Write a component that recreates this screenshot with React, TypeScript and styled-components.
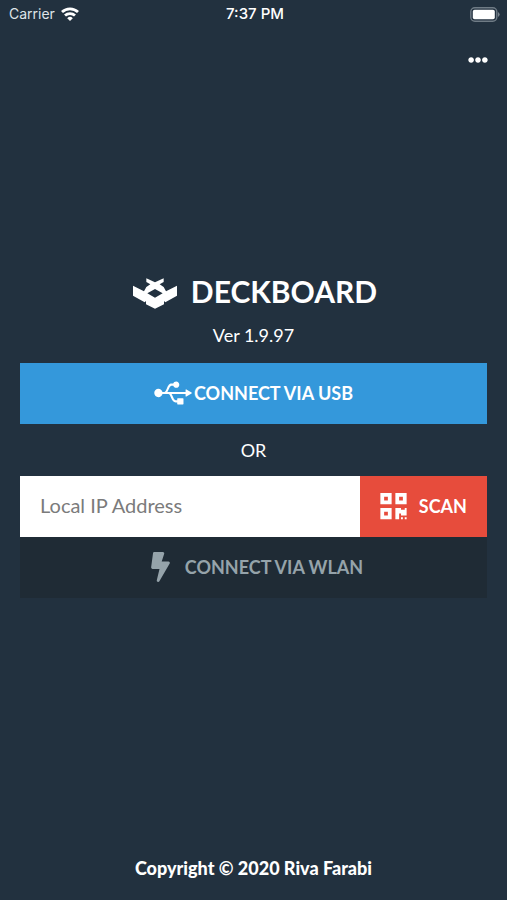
import React from "react";
import styled, { createGlobalStyle, css } from "styled-components";
import { FaUsb, FaBolt, FaQrcode, FaEllipsisH } from "react-icons/fa";

const GlobalStyle = createGlobalStyle`
  *, *::before, *::after { box-sizing: border-box; }
  body {
    margin: 0;
    background: #22313f;
    color: #fff;
    font-family: Lato, "Open Sans", sans-serif;
  }
  button, input { font: inherit; }
`;

const Page = styled.div`
  display: flex;
  flex-direction: column;
  min-height: 100vh;
`;

const StatusBar = styled.div`
  display: grid;
  grid-template-columns: 1fr auto 1fr;
  align-items: center;
  height: 28px;
  padding: 0 6px 0 9px;
  font: 14px/20px Inter, Roboto, sans-serif;
`;

const Carrier = styled.div`
  display: flex;
  align-items: center;
  gap: 6px;
  color: #dfe4e8;
`;

const Clock = styled.time`
  font-size: 15px;
  font-weight: 500;
`;

const BatteryIcon = styled.svg`
  justify-self: end;
`;

const Toolbar = styled.header`
  display: flex;
  justify-content: flex-end;
  padding: 22px 19px 2px;
`;

const IconButton = styled.button`
  display: flex;
  padding: 0;
  border: 0;
  background: none;
  color: #fff;
`;

const Main = styled.main`
  display: flex;
  flex: 1;
  flex-direction: column;
  justify-content: center;
  padding: 0 20px;
`;

const Brand = styled.div`
  display: flex;
  align-items: flex-end;
  justify-content: center;
  gap: 14px;
  padding-left: 3px;
`;

const Title = styled.h1`
  margin: 0;
  font-size: 30px;
  line-height: 36px;
  font-weight: 700;
`;

const Caption = styled.p`
  margin: 0;
  padding: 14px 0;
  font-size: 18px;
  line-height: 24px;
  text-align: center;
`;

const Version = styled(Caption)`
  padding-bottom: 16px;
`;

const tones = {
  blue: css`background: #3498db; color: #fff;`,
  red: css`background: #e74c3c; color: #fff;`,
  dark: css`background: #1f2b35; color: #95a3aa;`,
};

const ActionButton = styled.button<{ $tone: keyof typeof tones; $gap: number; $iconWidth: number }>`
  display: flex;
  align-items: center;
  justify-content: center;
  gap: ${({ $gap }) => $gap}px;
  min-height: 61px;
  padding: 0 20px 2px;
  border: 0;
  font-size: 18px;
  font-weight: 700;
  ${({ $tone }) => tones[$tone]}

  svg {
    flex: none;
    width: ${({ $iconWidth }) => $iconWidth}px;
    height: 30px;
  }
`;

const AddressRow = styled.div`
  display: flex;
`;

const AddressInput = styled.input`
  flex: 1;
  min-width: 0;
  padding: 0 20px 4px;
  border: 0;
  border-radius: 0;
  background: #fff;
  color: #333;
  font-size: 20px;
  &::placeholder { color: #7b7b7b; opacity: 1; }
`;

const Footer = styled.footer`
  padding: 57px 20px 20px;
  font-size: 18px;
  line-height: 24px;
  font-weight: 900;
  text-align: center;
`;

const Wifi = () => (
  <svg width="18" height="14" viewBox="0 0 18 14" fill="none" stroke="#fff" strokeWidth="2.8" aria-hidden="true">
    <path d="M1 5a11.6 11.6 0 0 1 16 0M4 8.6a7.2 7.2 0 0 1 10 0" />
    <path d="M9 14 6.2 11.2a4 4 0 0 1 5.6 0z" fill="#fff" stroke="none" />
  </svg>
);

const Battery = () => (
  <BatteryIcon width="31" height="15" viewBox="0 0 31 15" role="img" aria-label="Battery full">
    <rect x="0.8" y="0.8" width="26" height="13.4" rx="4" fill="none" stroke="#6f7b85" strokeWidth="1.4" />
    <rect x="2.8" y="2.8" width="22" height="9.4" rx="1.8" fill="#fff" />
    <path d="M28 5q3.4 2.5 0 5z" fill="#78838c" />
  </BatteryIcon>
);

const Logo = () => (
  <svg width="44" height="31" viewBox="0 0 132 93" fill="#fff" aria-hidden="true">
    <path
      d="M40 1 66 13 92 1V12L80 19 92 27 99 40 132 23V53L97 73 93 69V79L66 92 39 79V69L35 73L0 53V23L33 40 40 27 52 19 40 12Z M66 33 43 46 66 59 89 46Z"
      fillRule="evenodd"
    />
  </svg>
);

export default function App() {
  return (
    <Page>
      <GlobalStyle />
      <StatusBar>
        <Carrier>Carrier <Wifi /></Carrier>
        <Clock>7:37 PM</Clock>
        <Battery />
      </StatusBar>
      <Toolbar>
        <IconButton type="button" aria-label="More options"><FaEllipsisH size={20} /></IconButton>
      </Toolbar>
      <Main>
        <Brand><Logo /><Title>DECKBOARD</Title></Brand>
        <Version>Ver 1.9.97</Version>
        <ActionButton type="button" $tone="blue" $gap={2} $iconWidth={38}><FaUsb />CONNECT VIA USB</ActionButton>
        <Caption>OR</Caption>
        <AddressRow>
          <AddressInput type="text" aria-label="Local IP Address" placeholder="Local IP Address" />
          <ActionButton type="button" $tone="red" $gap={12} $iconWidth={27}><FaQrcode />SCAN</ActionButton>
        </AddressRow>
        <ActionButton type="button" $tone="dark" $gap={8} $iconWidth={33} disabled><FaBolt />CONNECT VIA WLAN</ActionButton>
      </Main>
      <Footer>Copyright © 2020 Riva Farabi</Footer>
    </Page>
  );
}
